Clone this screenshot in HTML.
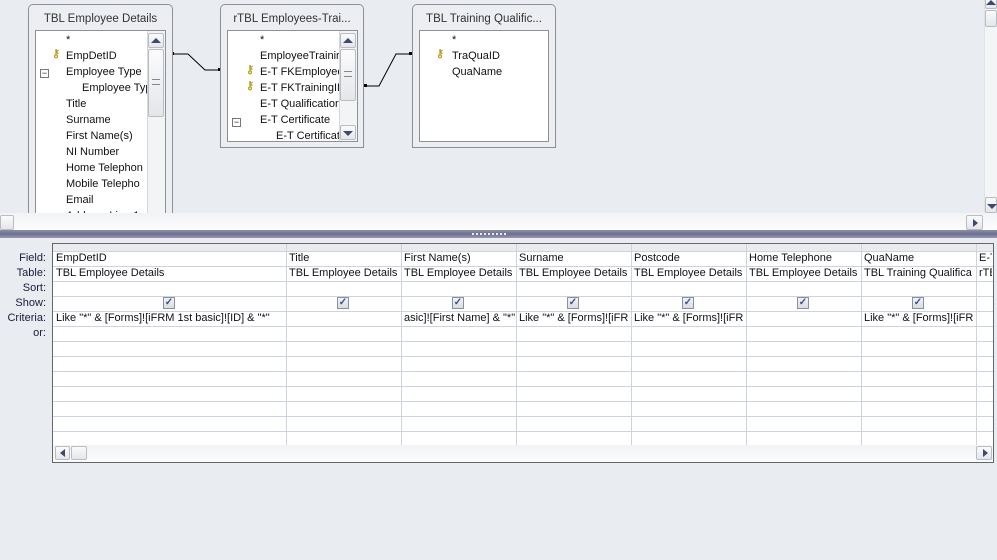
<!DOCTYPE html>
<html><head><style>
*{margin:0;padding:0;box-sizing:border-box}
body{width:997px;height:560px;background:#e9ecf0;font-family:"Liberation Sans",sans-serif;font-size:11px;color:#1e1e1e;position:relative;overflow:hidden}
.a{position:absolute}
.box{position:absolute;border:1px solid #8d9196;border-radius:5px 5px 0 0;background:#eceef1}
.ttl{position:absolute;top:8px;left:0;right:0;text-align:center;font-size:11.5px;color:#333;white-space:nowrap}
.in{position:absolute;background:#fff;border:1px solid #8d9196;overflow:hidden}
.f{position:absolute;white-space:nowrap;font-size:11px;color:#111}
.sb{position:absolute;background:#f3f4f6;border-left:1px solid #d6d8dc}
.btn{position:absolute;border:1px solid #b9bcc2;background:linear-gradient(#fbfbfc,#e4e6ea);border-radius:2px}
.up{width:0;height:0;border-left:5px solid transparent;border-right:5px solid transparent;border-bottom:5px solid #3d4a6e;position:absolute}
.dn{width:0;height:0;border-left:5px solid transparent;border-right:5px solid transparent;border-top:5px solid #3d4a6e;position:absolute}
.key{position:absolute;color:#b89b1a;font-size:11px;font-weight:bold}
.ms{position:absolute;width:9px;height:9px;border:1px solid #777;font-size:9px;line-height:6px;text-align:center}
.lbl{position:absolute;right:951px;font-size:11px;color:#1b1b3a;text-align:right;white-space:nowrap}
.cell{position:absolute;white-space:nowrap;overflow:hidden;font-size:11px;color:#111}
.chk{position:absolute;width:12px;height:12px;border:1px solid #8a8f99;background:linear-gradient(#f2f3f5,#d9dce2);color:#3a4f8e;font-size:10px;line-height:10px;text-align:center;font-weight:bold}
</style></head><body>

<div class="a" style="left:0;top:0;width:984px;height:213px;overflow:hidden">
<!-- lines -->
<svg class="a" style="left:0;top:0" width="984" height="213"><polyline points="172,54 188,54 205,70 220,70" fill="none" stroke="#000" stroke-width="1"/><polyline points="364,86 379,86 396,54 412,54" fill="none" stroke="#000" stroke-width="1"/>
<rect x="171" y="52" width="3" height="3"/><rect x="218" y="68" width="3" height="3"/><rect x="364" y="84" width="3" height="3"/><rect x="409" y="52" width="3" height="3"/></svg>

<!-- box1 -->
<div class="box" style="left:28px;top:4px;width:145px;height:240px">
<div class="ttl">TBL Employee Details</div>
<div class="in" style="left:6px;top:25px;width:131px;height:215px">
<div class="f" style="left:30px;top:3px">*</div>
<div class="key" style="left:16px;top:16px">&#9911;</div>
<div class="f" style="left:30px;top:19px">EmpDetID</div>
<div class="ms" style="left:4px;top:38px">−</div>
<div class="f" style="left:30px;top:35px">Employee Type</div>
<div class="f" style="left:46px;top:51px">Employee Typ</div>
<div class="f" style="left:30px;top:67px">Title</div>
<div class="f" style="left:30px;top:83px">Surname</div>
<div class="f" style="left:30px;top:99px">First Name(s)</div>
<div class="f" style="left:30px;top:115px">NI Number</div>
<div class="f" style="left:30px;top:131px">Home Telephon</div>
<div class="f" style="left:30px;top:147px">Mobile Telepho</div>
<div class="f" style="left:30px;top:163px">Email</div>
<div class="f" style="left:30px;top:179px">Address Line 1</div>
<div class="sb" style="left:111px;top:0;width:19px;height:215px"></div>
<div class="btn" style="left:112px;top:2px;width:16px;height:15px"><div class="up" style="left:2px;top:4px"></div></div>
<div class="btn" style="left:112px;top:18px;width:16px;height:68px"><div class="a" style="left:3px;top:29px;width:8px;height:6px;border-top:1px solid #888;border-bottom:1px solid #888"></div></div>
</div></div>

<!-- box2 -->
<div class="box" style="left:220px;top:4px;width:144px;height:144px">
<div class="ttl">rTBL Employees-Trai...</div>
<div class="in" style="left:6px;top:25px;width:131px;height:112px">
<div class="f" style="left:32px;top:3px">*</div>
<div class="f" style="left:32px;top:19px">EmployeeTrainir</div>
<div class="key" style="left:18px;top:32px">&#9911;</div>
<div class="f" style="left:32px;top:35px">E-T FKEmployee:</div>
<div class="key" style="left:18px;top:48px">&#9911;</div>
<div class="f" style="left:32px;top:51px">E-T FKTrainingID</div>
<div class="f" style="left:32px;top:67px">E-T Qualificatior</div>
<div class="ms" style="left:4px;top:87px">−</div>
<div class="f" style="left:32px;top:83px">E-T Certificate</div>
<div class="f" style="left:48px;top:99px">E-T Certificat</div>
<div class="sb" style="left:111px;top:0;width:19px;height:112px"></div>
<div class="btn" style="left:112px;top:2px;width:16px;height:15px"><div class="up" style="left:2px;top:4px"></div></div>
<div class="btn" style="left:112px;top:18px;width:16px;height:52px"><div class="a" style="left:3px;top:21px;width:8px;height:6px;border-top:1px solid #888;border-bottom:1px solid #888"></div></div>
<div class="btn" style="left:112px;top:94px;width:16px;height:15px"><div class="dn" style="left:2px;top:5px"></div></div>
</div></div>

<!-- box3 -->
<div class="box" style="left:412px;top:4px;width:144px;height:144px">
<div class="ttl">TBL Training Qualific...</div>
<div class="in" style="left:6px;top:25px;width:130px;height:112px">
<div class="f" style="left:32px;top:3px">*</div>
<div class="key" style="left:16px;top:16px">&#9911;</div>
<div class="f" style="left:32px;top:19px">TraQuaID</div>
<div class="f" style="left:32px;top:35px">QuaName</div>
</div></div>
</div>

<!-- top pane scrollbars -->
<div class="a" style="left:984px;top:0;width:13px;height:213px;background:#f4f5f7;border-left:1px solid #e0e2e6"></div>
<div class="btn" style="left:985px;top:-3px;width:12px;height:12px"><div class="up" style="left:0;top:2px"></div></div>
<div class="btn" style="left:985px;top:10px;width:12px;height:17px"></div>
<div class="btn" style="left:985px;top:197px;width:12px;height:16px"><div class="dn" style="left:1px;top:6px"></div></div>
<div class="a" style="left:0;top:213px;width:997px;height:17px;background:linear-gradient(#f2f3f5,#fcfcfd)"></div>
<div class="btn" style="left:0;top:215px;width:14px;height:15px"></div>
<div class="btn" style="left:966px;top:215px;width:17px;height:15px"><div style="position:absolute;left:6px;top:3px;border-top:4px solid transparent;border-bottom:4px solid transparent;border-left:5px solid #3d4a6e"></div></div>
<!-- splitter -->
<div class="a" style="left:0;top:230px;width:997px;height:8px;background:linear-gradient(#8d8fa8,#6c6f8e 50%,#9799b2)"></div>
<div class="a" style="left:472px;top:233px;width:36px;height:2px;background:repeating-linear-gradient(90deg,#eee 0 2px,transparent 2px 4px)"></div>

<!-- labels -->
<div class="lbl" style="top:252px">Field:</div>
<div class="lbl" style="top:267px">Table:</div>
<div class="lbl" style="top:282px">Sort:</div>
<div class="lbl" style="top:297px">Show:</div>
<div class="lbl" style="top:312px">Criteria:</div>
<div class="lbl" style="top:327px">or:</div>

<!-- grid -->
<div class="a" style="left:52px;top:243px;width:942px;height:220px;background:#fff;border:1px solid #666;overflow:hidden">
<div class="a" style="left:0;top:0;width:942px;height:7px;background:#eaebee"></div>
<svg class="a" style="left:0;top:0" width="942" height="202">
<g stroke="#cdd4e0" stroke-width="1">
<line x1="0" y1="7.5" x2="942" y2="7.5"/><line x1="0" y1="22.5" x2="942" y2="22.5"/><line x1="0" y1="37.5" x2="942" y2="37.5"/><line x1="0" y1="52.5" x2="942" y2="52.5"/><line x1="0" y1="67.5" x2="942" y2="67.5"/><line x1="0" y1="82.5" x2="942" y2="82.5"/><line x1="0" y1="97.5" x2="942" y2="97.5"/><line x1="0" y1="112.5" x2="942" y2="112.5"/><line x1="0" y1="127.5" x2="942" y2="127.5"/><line x1="0" y1="142.5" x2="942" y2="142.5"/><line x1="0" y1="157.5" x2="942" y2="157.5"/><line x1="0" y1="172.5" x2="942" y2="172.5"/><line x1="0" y1="187.5" x2="942" y2="187.5"/>
<line x1="233.5" y1="0" x2="233.5" y2="202"/><line x1="348.5" y1="0" x2="348.5" y2="202"/><line x1="463.5" y1="0" x2="463.5" y2="202"/><line x1="578.5" y1="0" x2="578.5" y2="202"/><line x1="693.5" y1="0" x2="693.5" y2="202"/><line x1="808.5" y1="0" x2="808.5" y2="202"/><line x1="923.5" y1="0" x2="923.5" y2="202"/>
</g></svg>
<div class="a" style="left:0;top:201px;width:942px;height:18px;background:linear-gradient(#f2f3f5,#fcfcfd)"></div>
<div class="btn" style="left:2px;top:202px;width:15px;height:14px"><div style="position:absolute;left:4px;top:2px;border-top:4px solid transparent;border-bottom:4px solid transparent;border-right:5px solid #3d4a6e"></div></div>
<div class="btn" style="left:18px;top:202px;width:16px;height:14px"></div>
<div class="btn" style="left:923px;top:202px;width:16px;height:14px"><div style="position:absolute;left:6px;top:2px;border-top:4px solid transparent;border-bottom:4px solid transparent;border-left:5px solid #3d4a6e"></div></div>
</div>

<!-- cells -->
<div class="cell" style="left:56px;top:252px">EmpDetID</div>
<div class="cell" style="left:56px;top:267px">TBL Employee Details</div>
<div class="chk" style="left:163px;top:297px">✓</div>
<div class="cell" style="left:56px;top:312px">Like "*" &amp; [Forms]![iFRM 1st basic]![ID] &amp; "*"</div>

<div class="cell" style="left:289px;top:252px">Title</div>
<div class="cell" style="left:289px;top:267px;width:111px">TBL Employee Details</div>
<div class="chk" style="left:337px;top:297px">✓</div>

<div class="cell" style="left:404px;top:252px">First Name(s)</div>
<div class="cell" style="left:404px;top:267px;width:111px">TBL Employee Details</div>
<div class="chk" style="left:452px;top:297px">✓</div>
<div class="cell" style="left:404px;top:312px;width:111px">asic]![First Name] &amp; "*"</div>

<div class="cell" style="left:519px;top:252px">Surname</div>
<div class="cell" style="left:519px;top:267px;width:111px">TBL Employee Details</div>
<div class="chk" style="left:567px;top:297px">✓</div>
<div class="cell" style="left:519px;top:312px;width:111px">Like "*" &amp; [Forms]![iFR</div>

<div class="cell" style="left:634px;top:252px">Postcode</div>
<div class="cell" style="left:634px;top:267px;width:111px">TBL Employee Details</div>
<div class="chk" style="left:682px;top:297px">✓</div>
<div class="cell" style="left:634px;top:312px;width:111px">Like "*" &amp; [Forms]![iFR</div>

<div class="cell" style="left:749px;top:252px">Home Telephone</div>
<div class="cell" style="left:749px;top:267px;width:111px">TBL Employee Details</div>
<div class="chk" style="left:797px;top:297px">✓</div>

<div class="cell" style="left:864px;top:252px">QuaName</div>
<div class="cell" style="left:864px;top:267px;width:111px">TBL Training Qualifica</div>
<div class="chk" style="left:912px;top:297px">✓</div>
<div class="cell" style="left:864px;top:312px;width:111px">Like "*" &amp; [Forms]![iFR</div>

<div class="cell" style="left:979px;top:252px;width:13px">E-T</div>
<div class="cell" style="left:979px;top:267px;width:13px">rTB</div>
</body></html>
